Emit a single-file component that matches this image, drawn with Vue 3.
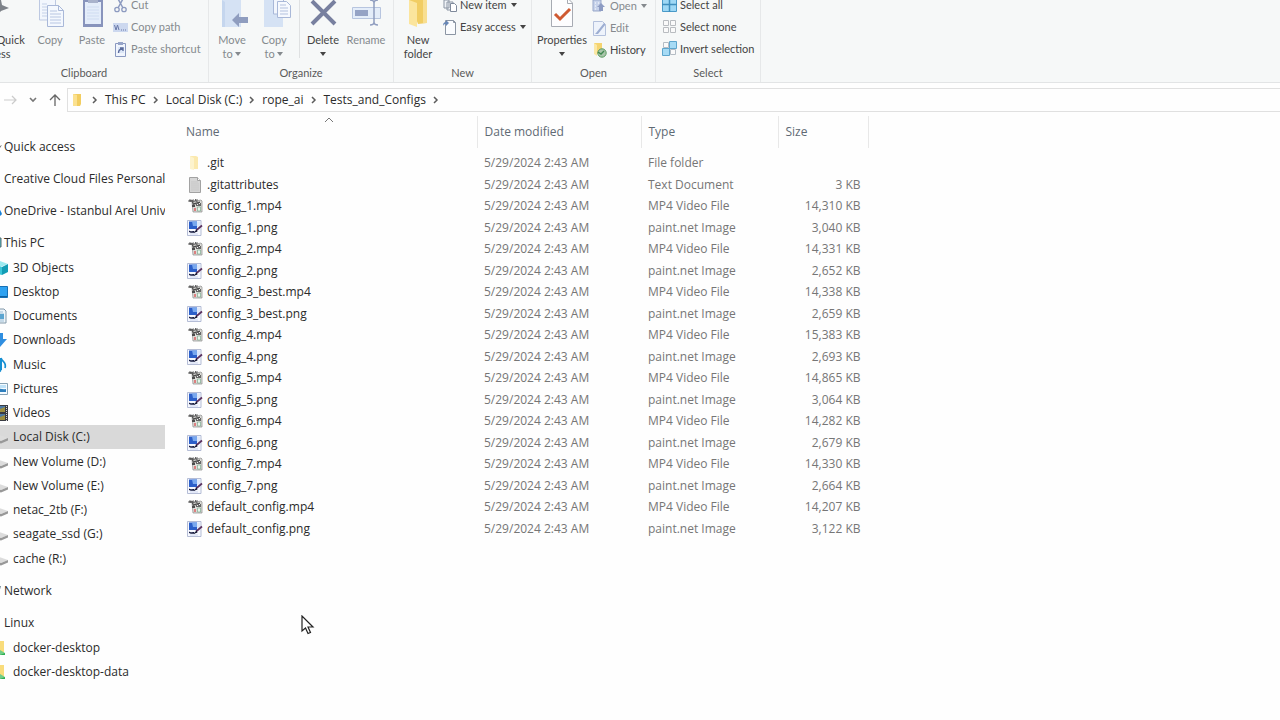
<script setup>
const date = '5/29/2024 2:43 AM'
const types = { dir: 'File folder', txt: 'Text Document', mp4: 'MP4 Video File', png: 'paint.net Image' }
const files = [
  ['.git', 'dir', ''],
  ['.gitattributes', 'txt', '3 KB'],
  ['config_1.mp4', 'mp4', '14,310 KB'],
  ['config_1.png', 'png', '3,040 KB'],
  ['config_2.mp4', 'mp4', '14,331 KB'],
  ['config_2.png', 'png', '2,652 KB'],
  ['config_3_best.mp4', 'mp4', '14,338 KB'],
  ['config_3_best.png', 'png', '2,659 KB'],
  ['config_4.mp4', 'mp4', '15,383 KB'],
  ['config_4.png', 'png', '2,693 KB'],
  ['config_5.mp4', 'mp4', '14,865 KB'],
  ['config_5.png', 'png', '3,064 KB'],
  ['config_6.mp4', 'mp4', '14,282 KB'],
  ['config_6.png', 'png', '2,679 KB'],
  ['config_7.mp4', 'mp4', '14,330 KB'],
  ['config_7.png', 'png', '2,664 KB'],
  ['default_config.mp4', 'mp4', '14,207 KB'],
  ['default_config.png', 'png', '3,122 KB'],
]
const crumbs = ['This PC', 'Local Disk (C:)', 'rope_ai', 'Tests_and_Configs']
const tree = [
  { label: 'Quick access', icon: 'star', items: [] },
  { label: 'Creative Cloud Files Personal Account', icon: '', items: [] },
  { label: 'OneDrive - Istanbul Arel Universitesi', icon: 'cloud', items: [] },
  {
    label: 'This PC',
    icon: 'pc',
    items: [
      ['3D Objects', 'cube'],
      ['Desktop', 'desk'],
      ['Documents', 'docs'],
      ['Downloads', 'down'],
      ['Music', 'music'],
      ['Pictures', 'pics'],
      ['Videos', 'film'],
      ['Local Disk (C:)', 'drive'],
      ['New Volume (D:)', 'drive'],
      ['New Volume (E:)', 'drive'],
      ['netac_2tb (F:)', 'drive'],
      ['seagate_ssd (G:)', 'drive'],
      ['cache (R:)', 'drive'],
    ],
  },
  { label: 'Network', icon: 'net', items: [] },
  { label: 'Linux', icon: '', items: [['docker-desktop', 'share'], ['docker-desktop-data', 'share']] },
]
</script>

<template>
  <div class="window">
    <svg class="sprite" aria-hidden="true">
      <symbol id="chev" viewBox="0 0 8 10"><path d="M2 2l3 3-3 3" fill="none" stroke="#5c5c5c" stroke-width="1.5" /></symbol>
      <symbol id="caret" viewBox="0 0 6 4"><path d="M0 0h6L3 4z" fill="currentColor" /></symbol>
      <symbol id="dir" viewBox="0 0 16 16"><path d="M3 1h6l2 1v12H3z" fill="#fbe9ae" /><path d="M3 1l4 2v12L3 14z" fill="#fdf3cd" /></symbol>
      <symbol id="txt" viewBox="0 0 16 16"><path d="M2.500.5h8l3 3v12h-11z" fill="#d6d6d6" stroke="#a2a2a2" /><path d="M10.500.5v3h3" fill="#fff" stroke="#a2a2a2" /><path d="M4 5h7M4 7h8M4 9h8M4 11h8M4 13h8" stroke="#c2c2c2" stroke-width=".7" /></symbol>
      <symbol id="mp4" viewBox="0 0 16 16">
        <path d="M5 4l9-2 1 1v11H6z" fill="#dcdcd8" stroke="#8a8a8a" stroke-width=".7" />
        <path d="M2 4V2h1.200v2V2h1.300v2M5.500 5V2H7v2H5.500M8.500 1v2H10M10 1v3" fill="none" stroke="#444" stroke-width=".8" />
        <path d="M5 5.500l8-2v1.500l-7 2zM5 7h3v2H5z" fill="#4c4c4c" />
        <path d="M9 5h5v3H9z" fill="#666" /><path d="M10 6h1v1h-1zM12 5h1v1h-1z" fill="#eee" />
        <path d="M7 10h2v3H7z" fill="#dc8080" /><path d="M10.500 9h3v4h-3z" fill="#e9f5ec" stroke="#6fa184" stroke-width=".6" />
      </symbol>
      <symbol id="png" viewBox="0 0 16 16">
        <path d="M.5.5h13.500v15H.5z" fill="#f6f8fe" stroke="#a3adcb" stroke-width=".8" />
        <path d="M2 1.500h8V9H2z" fill="#2c5fc9" /><path d="M5 1.500h5V6H6z" fill="#79a8ee" /><path d="M10 1.500h3V7h-3z" fill="#dfe8fa" />
        <path d="M2 10.500c2 1.500 3 0 5 .5l1 1.500c-2 .5-4 .5-6-.5z" fill="#161b40" />
        <path d="M15 5.500L9 10.500" stroke="#5b315e" stroke-width="1.700" /><path d="M9.500 9.500L6.500 13l4-1.500z" fill="#11152f" />
        <path d="M3 14h8" stroke="#cdd6f0" />
      </symbol>
      <symbol id="star" viewBox="0 0 16 16"><path d="M12 8l4-2-2 3z" fill="#777" /></symbol>
      <symbol id="cloud" viewBox="0 0 16 16"><path d="M4 12c-3-4 3-7 5-5 3-2 6 0 6 2 2 2 0 4-2 4H5z" fill="#1681d8" /></symbol>
      <symbol id="pc" viewBox="0 0 16 16"><path d="M1 3h14v9H1z" fill="#4cbfc9" stroke="#53676d" /></symbol>
      <symbol id="net" viewBox="0 0 16 16"><path d="M2 3h13l-2 7H4z" fill="#6f8794" /></symbol>
      <symbol id="cube" viewBox="0 0 16 16"><path d="M0 4l8-3 8 3-8 3z" fill="#9ceaf0" /><path d="M0 4l10 3v8L0 12z" fill="#3bc6d8" /><path d="M10 7l6-3v8l-6 3z" fill="#129db5" /></symbol>
      <symbol id="desk" viewBox="0 0 16 16"><path d="M.5 2.500h15v11H.5z" fill="#2ea2f1" stroke="#1670b5" /><path d="M1 12.500h14" stroke="#0f5f9f" /></symbol>
      <symbol id="docs" viewBox="0 0 16 16"><path d="M2 1h10l2 2v12H2z" fill="#eef5fa" stroke="#8198a9" /><path d="M7 4h4M7 6h5M5 11h7M5 13h7" stroke="#9dbdd5" /><path d="M8 6h4v5H8z" fill="#5ba5d0" /></symbol>
      <symbol id="down" viewBox="0 0 16 16"><path d="M4 1h7v6h4l-7 8-7-8h3z" fill="#2f8ee0" /></symbol>
      <symbol id="music" viewBox="0 0 16 16"><path d="M9 1c1 4 6 4 4 10" fill="none" stroke="#168fd2" stroke-width="1.700" /><path d="M9 1v12" stroke="#168fd2" stroke-width="2" /><circle cx="6.500" cy="12.500" r="3" fill="#168fd2" /></symbol>
      <symbol id="pics" viewBox="0 0 16 16"><path d="M.5 2.500h15v11H.5z" fill="#f5fbff" stroke="#87a2b5" /><path d="M2 4h12v3H2z" fill="#bfe2f8" /><path d="M2 8c4-2 7 1 12 0v3H2z" fill="#2d7ebd" /></symbol>
      <symbol id="film" viewBox="0 0 16 16"><path d="M1 0h15v16H1z" fill="#393b43" /><path d="M4 1h9v6H4zM4 9h9v6H4z" fill="#4a78a5" /><path d="M8 4l5-2v5H8zM8 12l5-2v5H8z" fill="#9c8d3e" /><path d="M14.500 1v15" stroke="#dadada" stroke-dasharray="1 1" /></symbol>
      <symbol id="drive" viewBox="0 0 16 16"><path d="M1 9l6-3 9 3-7 3z" fill="#dcdcdc" /><path d="M1 9l8 3 7-3v2.500l-7 3-8-3z" fill="#989898" /></symbol>
      <symbol id="share" viewBox="0 0 16 16"><path d="M3 1h9v12H3z" fill="#f9dc7b" /><path d="M3 14h10" stroke="#2fae54" stroke-width="2" /><path d="M8 10l5 3-5 2z" fill="#70cd88" /></symbol>
    </svg>

    <header class="ribbon">
      <section class="group clipboard">
        <div class="tools">
          <button class="big pin">
            <svg width="34" height="33" viewBox="0 0 34 33"><path d="M13 0h10l1 5 7 3-8 3-7 8v-8H7l5-5z" fill="#7d8289" /></svg>
            <span>Pin to Quick access</span>
          </button>
          <button class="big dim">
            <svg width="34" height="33" viewBox="0 0 34 33">
              <path d="M6.500-4h13l3 4v20h-16z" fill="#f2f6fd" stroke="#bdc9e2" /><path d="M9 4h5M9 7h5M9 10h5M9 13h5M9 16h5" stroke="#c5d1e8" />
              <path d="M14.500 5.500h11l5 5v16h-16z" fill="#f4f8fe" stroke="#a9b8d8" /><path d="M25.500 5.500v5h5" fill="none" stroke="#a9b8d8" /><path d="M17 11h7M17 14h11M17 17h11M17 20h11M17 23h11" stroke="#b8c6e2" />
            </svg>
            <span>Copy</span>
          </button>
          <button class="big dim">
            <svg width="34" height="33" viewBox="0 0 34 33">
              <path d="M8 0h20v27H8z" fill="#8894bc" /><path d="M10 2h16v22H10z" fill="#e4edfa" /><path d="M13 0h10v3H13z" fill="#a9b3cc" /><path d="M12 7h12M12 10h12M12 13h12M12 16h12M12 19h12" stroke="#cfdcf1" />
            </svg>
            <span>Paste</span>
          </button>
          <div class="stack">
            <button class="small dim">
              <svg width="16" height="16" viewBox="0 0 16 16"><path d="M4 0l6 11M11 0L5 11" stroke="#8d9bc0" stroke-width="1.500" /><circle cx="4" cy="12.500" r="2.200" fill="none" stroke="#8d9bc0" stroke-width="1.300" /><circle cx="11" cy="12.500" r="2.200" fill="none" stroke="#8d9bc0" stroke-width="1.300" /></svg>Cut
            </button>
            <button class="small dim">
              <svg width="16" height="16" viewBox="0 0 16 16"><path d="M0 4h15v9H0z" fill="#ccd8ef" /><path d="M1.500 6l1.500 5 1.500-5 1.500 5M8 11h1M10 11h1M12 11h1" fill="none" stroke="#6878a8" /></svg>Copy path
            </button>
            <button class="small dim">
              <svg width="16" height="16" viewBox="0 0 16 16"><path d="M2.500 2.500h10v13h-10z" fill="#f0f5fd" stroke="#8a99c0" /><path d="M5 1h5v3H5z" fill="#97a5c8" /><path d="M5 6h6v6H5z" fill="#dbe6f7" /><path d="M5.500 12c0-3 1-4 4-4M7 7h3v3" fill="none" stroke="#5b6c9c" stroke-width="1.400" /></svg>Paste shortcut
            </button>
          </div>
        </div>
        <h2>Clipboard</h2>
      </section>

      <section class="group organize">
        <div class="tools">
          <button class="big dim">
            <svg width="34" height="33" viewBox="0 0 34 33"><path d="M7 0h19v27H7z" fill="#d5e2f4" /><path d="M7 0l3 2v25H7z" fill="#c5d6ee" /><path d="M17 20l7-7v4h9v6h-9v4z" fill="#8f9dbf" /></svg>
            <span>Move<br />to <svg class="caret" width="6" height="4"><use href="#caret" /></svg></span>
          </button>
          <button class="big dim">
            <svg width="34" height="33" viewBox="0 0 34 33"><path d="M7 0h19v27H7z" fill="#d5e2f4" /><path d="M16.500-3h10v17h-10z" fill="#f2f6fd" stroke="#a9b8d8" /><path d="M20.500 1.500h9l4 4v12h-13z" fill="#f6f9fe" stroke="#a9b8d8" /><path d="M23 5h6M23 8h8M23 11h8M23 14h8" stroke="#b3c1de" /></svg>
            <span>Copy<br />to <svg class="caret" width="6" height="4"><use href="#caret" /></svg></span>
          </button>
          <i class="rule"></i>
          <button class="big">
            <svg width="34" height="33" viewBox="0 0 34 33"><path d="M6 1l23 23M29 1L6 24" stroke="#78809f" stroke-width="4" /></svg>
            <span>Delete<br /><svg class="caret" width="6" height="4"><use href="#caret" /></svg></span>
          </button>
          <button class="big dim">
            <svg width="34" height="33" viewBox="0 0 34 33"><path d="M3.500 7.500h28v11h-28z" fill="#e4edf9" stroke="#b7c5df" /><path d="M6 10h13v6H6z" fill="#95a3c5" /><path d="M21 0c3 0 4 1 4 3v19c0 2-1 3-4 3M29 0c-3 0-4 1-4 3M25 22c0 2 1 3 4 3" fill="none" stroke="#8f9dbf" stroke-width="1.500" /></svg>
            <span>Rename</span>
          </button>
        </div>
        <h2>Organize</h2>
      </section>

      <section class="group new">
        <div class="tools">
          <button class="big">
            <svg width="34" height="33" viewBox="0 0 34 33"><path d="M8 0h18v23l-9 1z" fill="#f1cd63" /><path d="M22 0h4v23h-4z" fill="#f8df91" /><path d="M8 0l8 3v24l-8-3z" fill="#fbe59d" /></svg>
            <span>New<br />folder</span>
          </button>
          <div class="stack">
            <button class="small">
              <svg width="16" height="16" viewBox="0 0 16 16"><path d="M2 3h5v8H2zM5 5h6v8H5z" fill="#eef2f6" stroke="#8b95a3" /><path d="M8.500 6.500h4l2 2v6h-6z" fill="#fff" stroke="#7f8a9b" /></svg>New item<svg class="caret" width="6" height="4"><use href="#caret" /></svg>
            </button>
            <button class="small">
              <svg width="16" height="16" viewBox="0 0 16 16"><path d="M3.500 1.500h8l2 2v12h-10z" fill="#fafcfe" stroke="#8b95a3" /><path d="M11.500 1.500v2h2" fill="none" stroke="#8b95a3" /><path d="M1 7c0-3 1-4 3-4V1l3 3-3 3V5C3 5 2 5 1 7z" fill="#6787b7" /></svg>Easy access<svg class="caret" width="6" height="4"><use href="#caret" /></svg>
            </button>
            <span class="small"></span>
          </div>
        </div>
        <h2>New</h2>
      </section>

      <section class="group open">
        <div class="tools">
          <button class="big">
            <svg width="34" height="33" viewBox="0 0 34 33"><path d="M6.500-2h16l5 5v23.500h-21z" fill="#fdfdfe" stroke="#a7abb3" /><path d="M22.500-2v5.500h5" fill="none" stroke="#a7abb3" /><path d="M10 14l5 5L25 9" fill="none" stroke="#cf5a32" stroke-width="3" /></svg>
            <span>Properties<br /><svg class="caret" width="6" height="4"><use href="#caret" /></svg></span>
          </button>
          <div class="stack">
            <button class="small dim">
              <svg width="16" height="16" viewBox="0 0 16 16"><path d="M1 2h8v11H1z" fill="#c6d2ea" stroke="#98a7c9" /><path d="M3 5h1M3 8h1M6 5h1M6 8h1M3 11h1" stroke="#fff" /><path d="M7 13V9H5l4-4 4 4h-2v4z" fill="#8d9cc3" /></svg>Open<svg class="caret" width="6" height="4"><use href="#caret" /></svg>
            </button>
            <button class="small dim">
              <svg width="16" height="16" viewBox="0 0 16 16"><path d="M1.500 1.500h9l3 3v11h-12z" fill="#eef3fb" stroke="#b4c1dc" /><path d="M4 13l8-10 1.500 1.500L6 14H3z" fill="#9daed2" /></svg>Edit
            </button>
            <button class="small">
              <svg width="16" height="16" viewBox="0 0 16 16"><path d="M2 1h8v11H2z" fill="#f5d470" /><path d="M2 1l3 2v11l-3-2z" fill="#fbe8a5" /><circle cx="10" cy="11" r="4.200" fill="#a9c5ab" stroke="#5c9d62" /><path d="M6 10l3 2 3-3" fill="none" stroke="#3f8750" stroke-width="1.400" /></svg>History
            </button>
          </div>
        </div>
        <h2>Open</h2>
      </section>

      <section class="group select">
        <div class="tools">
          <div class="stack">
            <button class="small">
              <svg width="16" height="16" viewBox="0 0 16 16"><path d="M.5.5h14v14H.5z" fill="#9ed8f5" stroke="#4a9ac8" /><path d="M7.500 0v15M0 7.500h15" stroke="#3f8fbe" stroke-width="1.500" /></svg>Select all
            </button>
            <button class="small">
              <svg width="16" height="16" viewBox="0 0 16 16"><path d="M1.500 1.500h5v5h-5zM8.500 1.500h5v5h-5zM1.500 8.500h5v5h-5zM8.500 8.500h5v5h-5z" fill="#fafafa" stroke="#b9bcc0" /></svg>Select none
            </button>
            <button class="small">
              <svg width="16" height="16" viewBox="0 0 16 16"><path d="M1.500 1.500h5v5h-5zM8.500 8.500h5v5h-5z" fill="#fafafa" stroke="#b4bcc4" /><path d="M7.500.5h7v7h-7zM.5 7.500h7v7h-7z" fill="#a6dbf5" stroke="#5ea6cd" /></svg>Invert selection
            </button>
          </div>
        </div>
        <h2>Select</h2>
      </section>
    </header>

    <div class="bar">
      <button aria-label="Forward"><svg width="14" height="12" viewBox="0 0 14 12"><path d="M0 6h12M8 2l4 4-4 4" fill="none" stroke="#cbcbcb" stroke-width="1.200" /></svg></button>
      <button aria-label="Recent locations"><svg width="8" height="6" viewBox="0 0 8 6"><path d="M1 1l3 3 3-3" fill="none" stroke="#777" stroke-width="1.600" /></svg></button>
      <button aria-label="Up"><svg width="12" height="14" viewBox="0 0 12 14"><path d="M6 13V2M1 7l5-5 5 5" fill="none" stroke="#666" stroke-width="1.300" /></svg></button>
      <nav class="path" aria-label="Path">
        <svg width="10" height="14" viewBox="0 0 10 14"><path d="M1 1h8v10l-1 2H1z" fill="#f2cd60" /><path d="M1 1l4 1v11H1z" fill="#fbe190" /></svg>
        <template v-for="c in crumbs" :key="c">
          <svg class="chev" width="8" height="10"><use href="#chev" /></svg>
          <a href="#">{{ c }}</a>
        </template>
        <svg class="chev" width="8" height="10"><use href="#chev" /></svg>
      </nav>
    </div>

    <div class="content">
      <nav class="tree" aria-label="Folders">
        <div v-for="n in tree" :key="n.label" class="node">
          <a href="#" class="root"><svg width="16" height="16"><use v-if="n.icon" :href="'#' + n.icon" /></svg>{{ n.label }}</a>
          <ul v-if="n.items.length">
            <li v-for="[label, icon] in n.items" :key="label">
              <a href="#" :class="{ current: label === 'Local Disk (C:)' }"><svg width="16" height="16"><use :href="'#' + icon" /></svg>{{ label }}</a>
            </li>
          </ul>
        </div>
      </nav>

      <main>
        <table>
          <thead>
            <tr>
              <th class="name"><button>Name</button><svg class="sort" width="10" height="6" viewBox="0 0 10 6"><path d="M1 5l4-4 4 4" fill="none" stroke="#777" /></svg></th>
              <th class="date"><button>Date modified</button></th>
              <th class="type"><button>Type</button></th>
              <th class="size"><button>Size</button></th>
            </tr>
          </thead>
          <tbody>
            <tr v-for="[name, kind, size] in files" :key="name">
              <td class="file"><div><svg width="16" height="16"><use :href="'#' + kind" /></svg>{{ name }}</div></td>
              <td>{{ date }}</td>
              <td>{{ types[kind] }}</td>
              <td class="num">{{ size }}</td>
            </tr>
          </tbody>
        </table>
      </main>
    </div>

    <svg class="pointer" width="14" height="20" viewBox="0 0 14 20"><path d="M1 1v15l3.500-3 2.500 5.500 2.500-1L7 12h5z" fill="#fff" stroke="#222" stroke-width="1.200" /></svg>
  </div>
</template>

<style>
body {
  overflow: hidden;
}
</style>

<style scoped>
.window {
  position: relative;
  min-height: 100vh;
  display: flex;
  flex-direction: column;
  overflow: hidden;
  background: #fefefe;
  color: #2b2b2b;
  font: 12px/16px "Open Sans", "Noto Sans", sans-serif;
}
.sprite {
  position: absolute;
  width: 0;
  height: 0;
}
button {
  border: 0;
  padding: 0;
  background: none;
  font: inherit;
  color: inherit;
}
a {
  color: inherit;
  text-decoration: none;
}
svg {
  flex: none;
}
.ribbon {
  display: flex;
  background: #f6f8f8;
  border-bottom: 1px solid #e2e4e5;
  color: #444;
  font: 11px/16px Lato, "Open Sans", sans-serif;
}
.group {
  box-sizing: border-box;
  border-right: 1px solid #e6e8e9;
}
.group h2 {
  margin: 4px 0 0;
  padding-bottom: 1px;
  font-size: 11px;
  font-weight: 400;
  text-align: center;
  color: #5a5a5a;
}
.tools {
  display: flex;
  height: 61px;
}
.clipboard {
  width: 209px;
}
.clipboard .tools {
  justify-content: flex-end;
}
.clipboard h2 {
  padding-right: 40px;
}
.organize {
  width: 185px;
}
.new {
  width: 138px;
}
.open {
  width: 124px;
}
.select {
  width: 105px;
}
.big {
  flex: none;
  display: flex;
  flex-direction: column;
  align-items: center;
  width: 42px;
  line-height: 14px;
}
.big > svg {
  display: block;
}
.pin {
  width: 68px;
}
.organize .tools {
  padding-left: 2px;
}
.organize .rule + .big {
  width: 44px;
}
.new .big {
  width: 48px;
}
.open .big {
  width: 60px;
}
.rule {
  width: 1px;
  height: 58px;
  margin: 0 1px 0 4px;
  background: #dfe1e2;
}
.stack {
  flex: none;
  display: flex;
  flex-direction: column;
  justify-content: flex-end;
  padding-bottom: 1px;
}
.clipboard .stack {
  width: 95px;
}
.open .stack {
  padding-bottom: 0;
}
.select .stack {
  padding-left: 6px;
}
.small {
  flex: none;
  display: flex;
  align-items: center;
  gap: 2px;
  height: 22px;
  white-space: nowrap;
}
.small .caret {
  margin-left: 2px;
}
.big .caret {
  vertical-align: 2px;
}
.dim {
  color: #858a8e;
}
.bar {
  display: flex;
  align-items: center;
  height: 33px;
}
.bar > button {
  display: flex;
  justify-content: center;
  width: 22px;
}
.path {
  flex: 1;
  display: flex;
  align-items: center;
  height: 22px;
  margin-left: 1px;
  padding-left: 4px;
  border: 1px solid #e0e0e0;
  border-right: 0;
}
.chev {
  margin: 0 6px;
}
.path > svg:first-child {
  margin-right: 3px;
}
.content {
  flex: 1;
  display: flex;
}
.tree {
  flex: none;
  width: 165px;
  margin-right: 2px;
  padding-top: 19px;
  overflow: hidden;
}
.tree a {
  display: flex;
  align-items: center;
  height: 24px;
  white-space: nowrap;
  overflow: hidden;
}
.tree svg {
  margin: 0 5px 0 -8px;
}
.tree .root svg {
  margin-left: -14px;
  margin-right: 2px;
}
.tree ul {
  margin: 0;
  padding: 0;
  list-style: none;
}
.tree li:nth-child(4n + 1) {
  padding-top: 1px;
}
.node + .node {
  margin-top: 8px;
}
.tree .current {
  background: #d9d9d9;
}
main {
  flex: 1;
}
table {
  width: 702px;
  table-layout: fixed;
  border-collapse: collapse;
}
th,
td {
  padding: 0 6px 0 7px;
  text-align: left;
  font-weight: 400;
  color: #767676;
  white-space: nowrap;
}
th {
  height: 32px;
  border-right: 1px solid #e8e8e8;
  color: #5f6a74;
}
.name {
  position: relative;
  width: 310px;
  box-sizing: border-box;
  padding-left: 19px;
}
.date {
  width: 164px;
  box-sizing: border-box;
}
.type {
  width: 137px;
  box-sizing: border-box;
}
.sort {
  position: absolute;
  top: 1px;
  left: 157px;
}
tbody::before {
  content: "";
  display: block;
  height: 4px;
}
tbody tr {
  height: 21px;
}
tbody tr:nth-child(odd) {
  height: 22px;
}
.file {
  padding-left: 20px;
  color: #2b2b2b;
}
.file div {
  display: flex;
  align-items: center;
  gap: 4px;
}
.num {
  padding-right: 8px;
  text-align: right;
}
.pointer {
  position: absolute;
  left: 301px;
  top: 615px;
}
</style>
